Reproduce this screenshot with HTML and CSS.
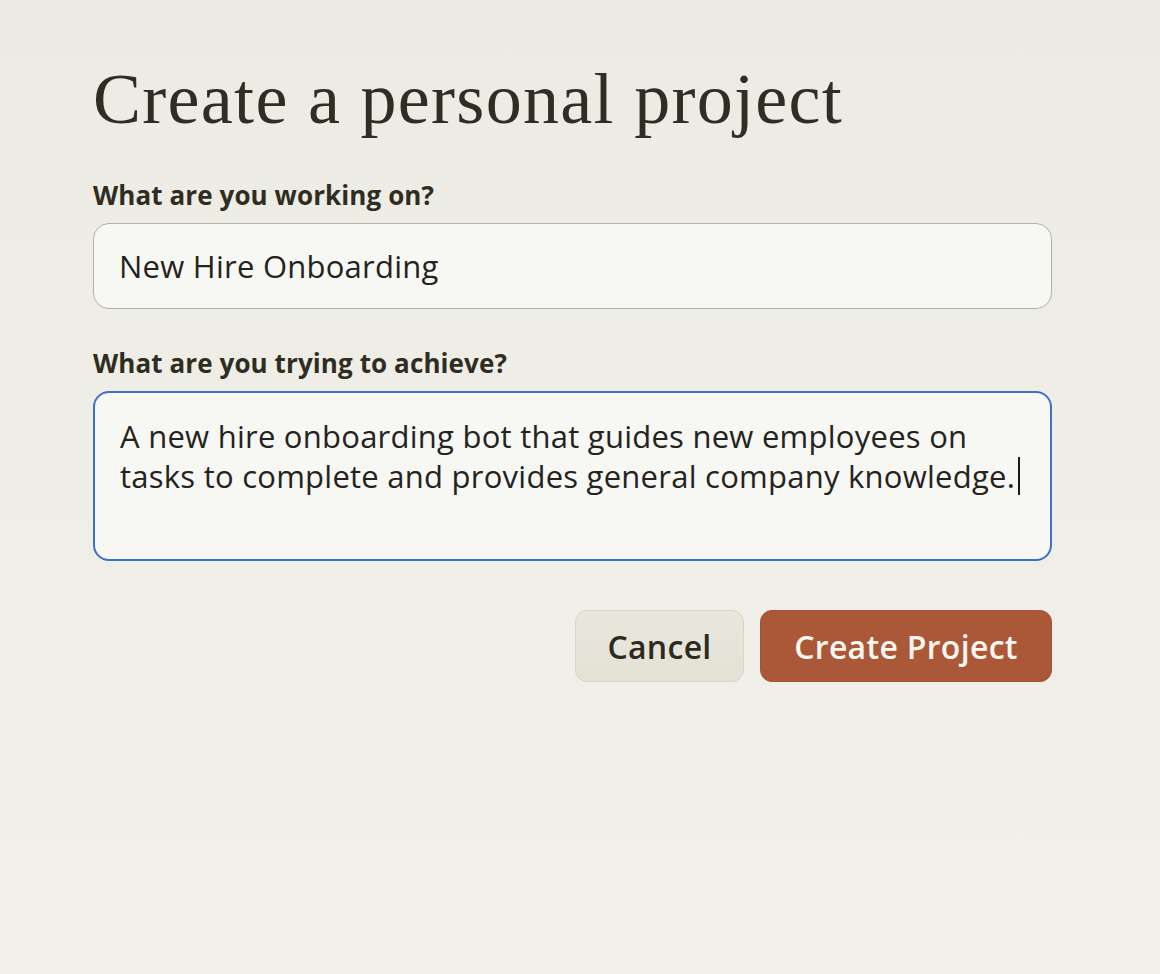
FILE: index.html
```html
<!DOCTYPE html>
<html>
<head>
<meta charset="utf-8">
<link rel="stylesheet" href="styles.css">
</head>
<body>
<main class="page">
  <h1 class="title">Create a personal project</h1>
  <div class="field">
    <label class="label">What are you working on?</label>
    <div class="input">New Hire Onboarding</div>
  </div>
  <div class="field field-second">
    <label class="label">What are you trying to achieve?</label>
    <div class="textarea">A new hire onboarding bot that guides new employees on tasks to complete and provides general company knowledge.<span class="caret"></span></div>
  </div>
  <div class="actions">
    <button class="btn btn-cancel">Cancel</button>
    <button class="btn btn-primary">Create Project</button>
  </div>
</main>
</body>
</html>
```
FILE: styles.css
```css
html, body {
  margin: 0;
  height: 100%;
}
body {
  background: linear-gradient(180deg, #ecebe3 0%, #efeee8 60%, #f1f0eb 100%);
  color: #29261b;
  font-family: "Open Sans", "Liberation Sans", sans-serif;
}
.page {
  width: 959px;
  padding: 59px 0 0 93px;
  display: flex;
  flex-direction: column;
}
.title {
  margin: 0 0 1px;
  font-family: "Liberation Serif", serif;
  font-weight: 400;
  font-size: 72px;
  line-height: 80px;
  color: #302e24;
  letter-spacing: 1.3px;
}
.field {
  display: flex;
  flex-direction: column;
}
.label {
  margin-top: 40px;
  font-size: 26px;
  font-weight: 700;
  line-height: 30px;
  letter-spacing: 0.1px;
  color: #2f2d22;
}
.field-second .label {
  margin-top: 39px;
}
.input {
  margin-top: 13px;
  box-sizing: border-box;
  height: 86px;
  border: 1.5px solid #b3b0a6;
  border-radius: 16px;
  background: #f7f7f4;
  padding: 0 25px;
  display: flex;
  align-items: center;
  font-size: 31px;
  line-height: 40px;
  letter-spacing: 0.25px;
  color: #24231d;
}
.textarea {
  margin-top: 13px;
  box-sizing: border-box;
  height: 170px;
  border: 2px solid #3b72c6;
  border-radius: 16px;
  background: #f7f7f4;
  padding: 23px 20px 0 25px;
  font-size: 31px;
  line-height: 40px;
  letter-spacing: 0.25px;
  color: #24231d;
}
.caret {
  display: inline-block;
  width: 2px;
  height: 38px;
  background: #1c1b17;
  vertical-align: -7px;
  margin-left: 3px;
}
.actions {
  margin-top: 49px;
  display: flex;
  justify-content: flex-end;
  gap: 16px;
}
.btn {
  height: 72px;
  border-radius: 12px;
  font-family: "Open Sans", "Liberation Sans", sans-serif;
  font-size: 32px;
  font-weight: 600;
  letter-spacing: 0.3px;
  padding: 0;
  cursor: pointer;
}
.btn-cancel {
  width: 169px;
  background: linear-gradient(180deg, #e9e7dc 0%, #e4e2d5 100%);
  border: 1px solid #d8d5c6;
  color: #2c2a21;
}
.btn-primary {
  width: 292px;
  background: #aa5838;
  border: 1px solid #a35233;
  color: #fbf6f0;
}
```
